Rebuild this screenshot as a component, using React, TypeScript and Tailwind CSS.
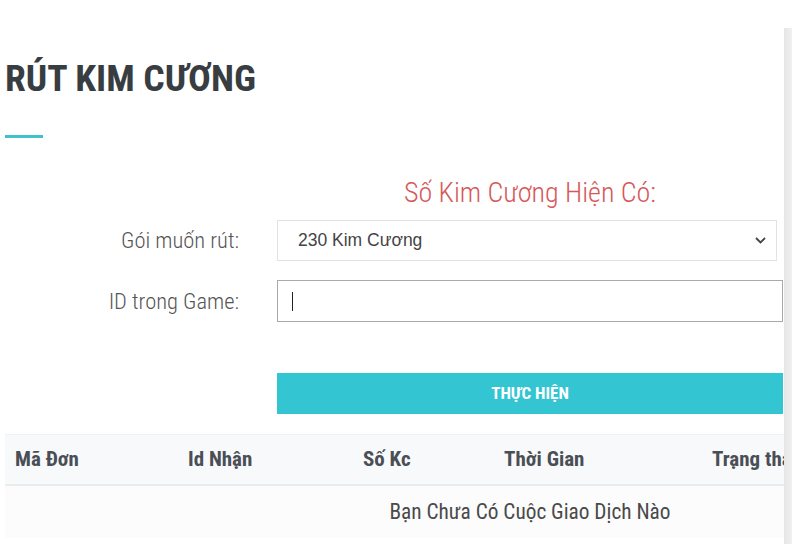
export default function App() {
  return (
    <div className="relative w-[792px] h-[544px] overflow-hidden bg-white font-['Roboto_Condensed',sans-serif]">
      <div className="pl-[5px] pt-[55px]">
        <h2 className="text-[37.6px] leading-[46px] font-bold text-[#383d42]">
          RÚT KIM CƯƠNG
        </h2>
        <div className="mt-[34px] w-[38px] h-[3px] bg-[#3ec3cc]" />

        <div className="mt-[38px] ml-[272px] w-[506px] text-center text-[28px] leading-[34px] font-light text-[#d65858]">
          Số Kim Cương Hiện Có:
        </div>

        <div className="mt-[10px] flex items-center">
          <div className="w-[272px] pr-[38px] pt-px text-right text-[22.5px] font-light text-[#555]">
            Gói muốn rút:
          </div>
          <div className="w-[500px] h-[41px] border border-[#e2e2e2] flex items-center justify-between pl-[20px] pr-[10px]">
            <span className="font-['Liberation_Sans',sans-serif] text-[17.5px] text-[#444]">230 Kim Cương</span>
            <svg width="11" height="7" viewBox="0 0 11 7" className="text-[#444]">
              <path d="M1 1l4.5 4.5L10 1" fill="none" stroke="currentColor" strokeWidth="1.8" />
            </svg>
          </div>
        </div>

        <div className="mt-[19px] flex items-center">
          <div className="w-[272px] pr-[38px] pt-[2px] text-right text-[22.5px] font-light text-[#555]">
            ID trong Game:
          </div>
          <div className="w-[506px] h-[42px] border border-[#a9a9a9] flex items-center pl-[14px]">
            <span className="w-px h-[19px] bg-[#222]" />
          </div>
        </div>

        <div className="mt-[51px] ml-[272px] w-[506px] h-[41px] bg-[#33c5d2] flex items-center justify-center text-white text-[17px] font-bold">
          THỰC HIỆN
        </div>

        <div className="mt-[20px] w-[1050px]">
          <div className="grid grid-cols-[173px_175px_141px_208px_1fr] items-center h-[52px] pl-[10px] bg-[#f8f9fa] border-t border-[#f0f1f2] border-b-2 border-b-[#e9ecef] text-[21px] font-bold text-[#4a4e55]">
            <div>Mã Đơn</div>
            <div>Id Nhận</div>
            <div>Số Kc</div>
            <div>Thời Gian</div>
            <div>Trạng thái</div>
          </div>
          <div className="h-[52px] flex items-center justify-center bg-[#fcfcfd] text-[21.3px] text-[#4a4a4a]">
            Bạn Chưa Có Cuộc Giao Dịch Nào
          </div>
        </div>
      </div>

      <div className="absolute left-[784px] top-[28px] bottom-0 w-[12px] bg-gradient-to-r from-[#e6e6e6] to-[#f5f5f5]" />
    </div>
  );
}
